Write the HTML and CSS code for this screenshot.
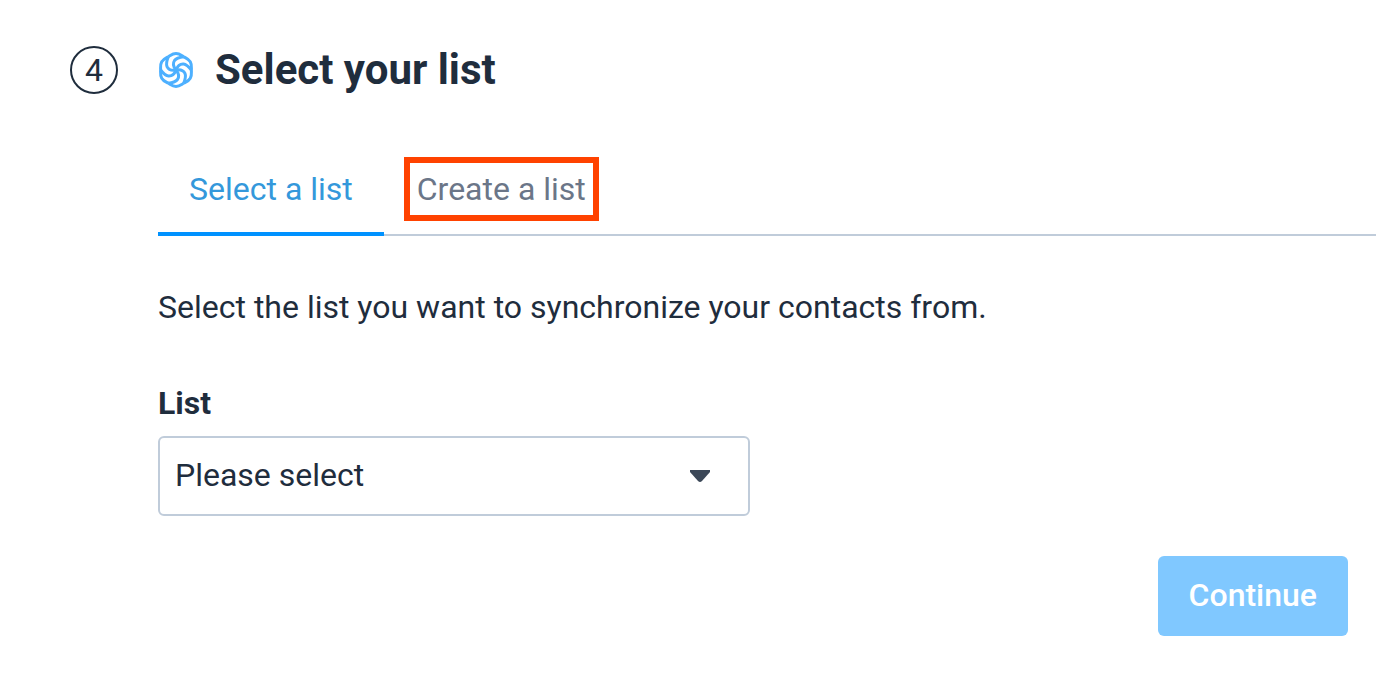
FILE: index.html
```html
<!DOCTYPE html>
<html lang="en">
<head>
  <meta charset="UTF-8">
  <meta name="viewport" content="width=device-width, initial-scale=1.0">
  <title>Select your list</title>
  <link rel="stylesheet" href="styles.css">
</head>
<body>
  <section class="step">
    <span class="step-number">4</span>

    <div class="step-content">
      <header class="step-header">
        <svg class="logo" viewBox="0 0 36 36" aria-hidden="true">
          <defs>
            <path id="lobe" d="M10.300 4.700C12.500 3.500 14.500 1.500 18 1.500S23.500 3.500 25.700 4.700" />
            <path id="arm" d="M18 18C15.500 15 14.500 11.500 16.500 8.500C18.500 5.800 22 5.200 25.700 4.700" />
          </defs>
          <use href="#lobe" />
          <use href="#lobe" transform="rotate(60 18 18)" />
          <use href="#lobe" transform="rotate(120 18 18)" />
          <use href="#lobe" transform="rotate(180 18 18)" />
          <use href="#lobe" transform="rotate(240 18 18)" />
          <use href="#lobe" transform="rotate(300 18 18)" />
          <use href="#arm" />
          <use href="#arm" transform="rotate(60 18 18)" />
          <use href="#arm" transform="rotate(120 18 18)" />
          <use href="#arm" transform="rotate(180 18 18)" />
          <use href="#arm" transform="rotate(240 18 18)" />
          <use href="#arm" transform="rotate(300 18 18)" />
        </svg>
        <h1>Select your list</h1>
      </header>

      <nav class="tabs">
        <a class="tab active" href="#select">Select a list</a>
        <a class="tab" href="#create"><span class="highlight">Create a list</span></a>
      </nav>

      <form class="list-form">
        <p>Select the list you want to synchronize your contacts from.</p>
        <label for="list">List</label>
        <div class="select-box">
          <select id="list">
            <option>Please select</option>
          </select>
          <svg class="caret" viewBox="0 0 20 12" aria-hidden="true">
            <path d="M0 0h20v2l-8 9q-2 2-4 0L0 2z" />
          </svg>
        </div>
        <button type="button" disabled>Continue</button>
      </form>
    </div>
  </section>
</body>
</html>
```

FILE: styles.css
```css
* {
  box-sizing: border-box;
}

body {
  margin: 0;
  background-color: #fff;
  color: #1f2d3d;
  font-family: Roboto, Arial, sans-serif;
  font-size: 32px;
  line-height: 38px;
}

.step {
  display: flex;
  gap: 40px;
  padding: 46px 0 40px 70px;
}

.step-number {
  display: flex;
  flex: none;
  align-items: center;
  justify-content: center;
  width: 48px;
  height: 48px;
  border: 2px solid #1f2d3d;
  border-radius: 50%;
}

.step-content {
  flex: 1;
  min-width: 0;
}

.step-header {
  display: flex;
  align-items: center;
  gap: 21px;
  height: 48px;
}

.logo {
  width: 36px;
  height: 36px;
  fill: none;
  stroke: #4db0ff;
  stroke-width: 3;
  overflow: visible;
}

h1 {
  margin: 0;
  font-size: 42px;
  font-weight: bold;
  line-height: 48px;
}

.tabs {
  display: flex;
  gap: 2px;
  margin-top: 51px;
  border-bottom: 2px solid #c0ccda;
}

.tab {
  margin-bottom: -2px;
  padding: 25px 31px 24px;
  border-bottom: 4px solid transparent;
  color: #6b7688;
  text-decoration: none;
}

.tab.active {
  border-bottom-color: #0092ff;
  color: #3498db;
}

.highlight {
  display: block;
  outline: 6px solid #ff4200;
  outline-offset: 7px;
}

.list-form {
  display: flex;
  flex-direction: column;
  padding: 52px 28px 0 0;
}

p {
  margin: 0 0 58px;
}

label {
  margin-bottom: 14px;
  font-weight: bold;
}

.select-box {
  position: relative;
  width: 592px;
  max-width: 100%;
}

select {
  display: block;
  width: 100%;
  height: 80px;
  padding: 0 64px 2px 15px;
  appearance: none;
  background-color: #fff;
  border: 2px solid #c0ccda;
  border-radius: 6px;
  color: inherit;
  font: inherit;
}

.caret {
  position: absolute;
  top: 34px;
  right: 40px;
  width: 20px;
  height: 12px;
  fill: #3c4858;
  pointer-events: none;
}

button {
  align-self: flex-end;
  height: 80px;
  margin-top: 40px;
  padding: 0 31px 2px;
  background-color: #80c8ff;
  border: none;
  border-radius: 6px;
  color: #fff;
  font: inherit;
  font-weight: 500;
}
```
